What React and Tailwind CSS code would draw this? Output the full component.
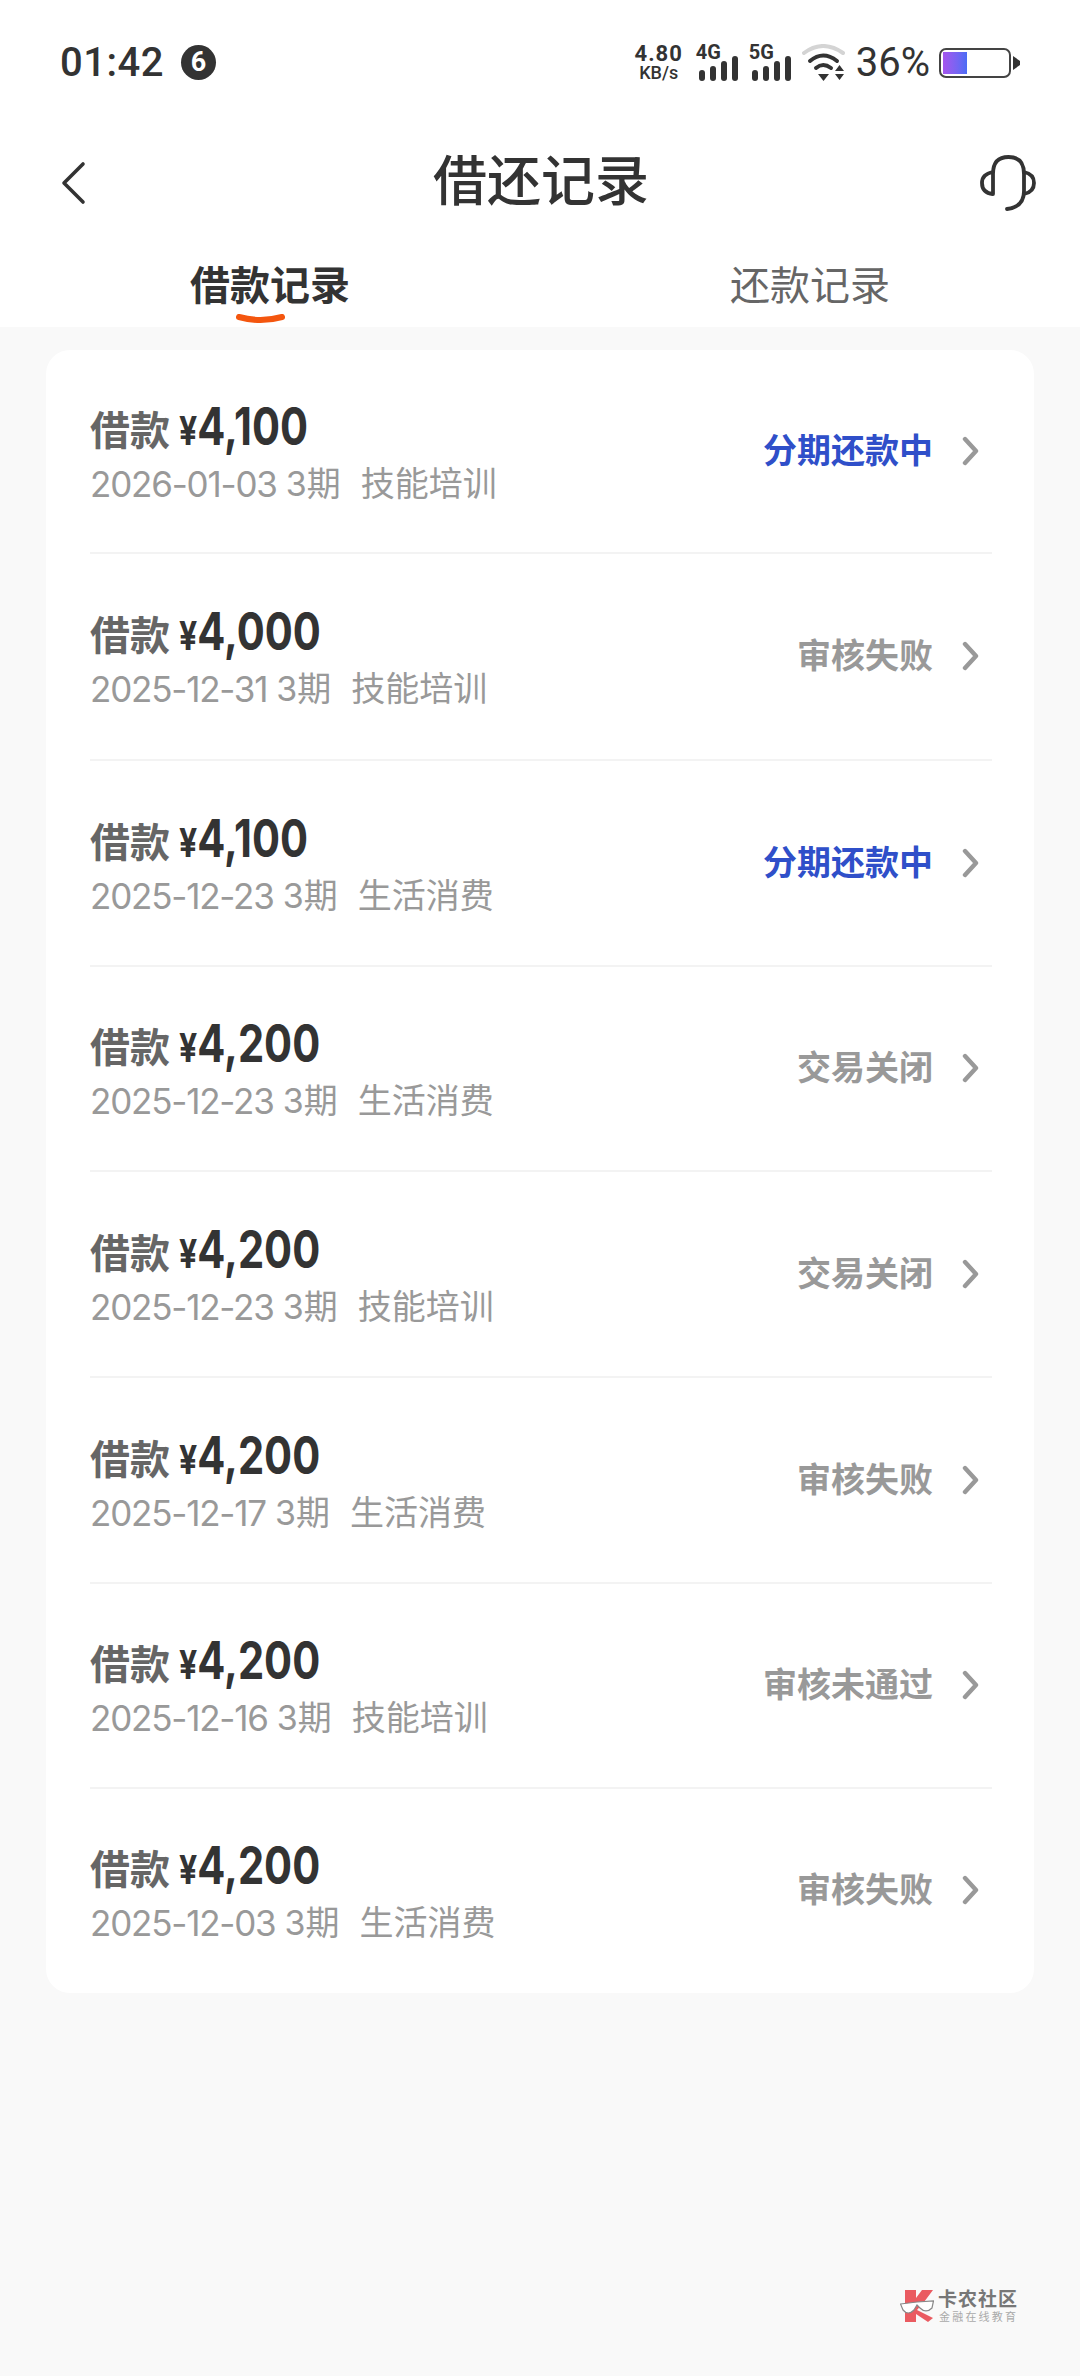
const CJK = "font-['Roboto','Noto_Sans_CJK_SC',sans-serif]";

const rows = [
  { date: "2026-01-03", tag: "技能培训", amount: "4,100", status: "分期还款中", blue: true, h: "h-[204px]" },
  { date: "2025-12-31", tag: "技能培训", amount: "4,000", status: "审核失败", h: "h-[207px]" },
  { date: "2025-12-23", tag: "生活消费", amount: "4,100", status: "分期还款中", blue: true, h: "h-[206px]" },
  { date: "2025-12-23", tag: "生活消费", amount: "4,200", status: "交易关闭", h: "h-[205px]" },
  { date: "2025-12-23", tag: "技能培训", amount: "4,200", status: "交易关闭", h: "h-[206px]" },
  { date: "2025-12-17", tag: "生活消费", amount: "4,200", status: "审核失败", h: "h-[206px]" },
  { date: "2025-12-16", tag: "技能培训", amount: "4,200", status: "审核未通过", h: "h-[205px]" },
  { date: "2025-12-03", tag: "生活消费", amount: "4,200", status: "审核失败", h: "h-[204px]", last: true },
];

function Signal() {
  return (
    <svg width="42" height="25" viewBox="0 0 42 25" className="block">
      <rect x="2" y="14" width="6" height="11" rx="3" fill="#333" />
      <rect x="13" y="10" width="6" height="15" rx="3" fill="#333" />
      <rect x="24" y="5" width="6" height="20" rx="3" fill="#333" />
      <rect x="35" y="0" width="6" height="25" rx="3" fill="#333" />
    </svg>
  );
}

function SignalGroup({ label }) {
  return (
    <div className="relative w-[42px] h-[36px]">
      <span className="absolute left-[-1px] top-[-2px] text-[20px] leading-[18px] font-bold text-[#333] font-['Roboto',sans-serif]">{label}</span>
      <div className="absolute left-0 bottom-0"><Signal /></div>
    </div>
  );
}

function Wifi() {
  return (
    <svg width="44" height="38" viewBox="0 0 44 38" className="block">
      <path d="M2 9 Q21 -5 41 9" fill="none" stroke="#d4d4d4" strokeWidth="4" strokeLinecap="round" />
      <path d="M8 17 Q21 6 35 17" fill="none" stroke="#333" strokeWidth="4" strokeLinecap="round" />
      <path d="M14 24 Q21 18 29 24" fill="none" stroke="#333" strokeWidth="4" strokeLinecap="round" />
      <path d="M16 30 H27 L21.5 37 Z" fill="#333" />
      <path d="M33 27 L37.500 21 L42 27 Z M33 30 H42 L37.500 36 Z" fill="#333" />
    </svg>
  );
}

function Battery() {
  return (
    <div className="flex items-center">
      <div className="w-[72px] h-[30px] rounded-[7px] border-2 border-[#444] p-[2px] flex">
        <div className="w-[24px] h-full bg-gradient-to-r from-[#a455ee] to-[#4a6cf5]" />
      </div>
      <svg width="7" height="14" viewBox="0 0 7 14" className="block ml-[2px]"><path d="M0 0 L7 5 V9 L0 14 Z" fill="#333" /></svg>
    </div>
  );
}

function Chevron() {
  return (
    <svg width="18" height="30" viewBox="0 0 18 30" className="block">
      <path d="M3 3 L14 15 L3 27" fill="none" stroke="#999" strokeWidth="4.400" strokeLinecap="round" strokeLinejoin="round" />
    </svg>
  );
}

function Row({ r }) {
  return (
    <div className={`${r.h} relative flex items-center pl-[44px] pr-[54px]`}>
      <div className="flex-1 min-w-0 mt-[3px]">
        <div className="flex items-baseline h-[56px]">
          <span className="text-[40px] leading-[56px] font-bold text-[#666]">借款</span>
          <span className="ml-[9px] inline-block origin-left scale-x-[0.8] text-[52px] leading-[56px] font-bold text-[#333] font-['Inter',sans-serif] whitespace-nowrap">
            <span className="text-[40px]">¥</span>{r.amount}
          </span>
        </div>
        <div className="mt-[4px] h-[50px] flex items-center text-[34px] leading-[50px] text-[#999] whitespace-nowrap font-['Inter','Noto_Sans_CJK_SC',sans-serif]">
          <span className="text-[35px] tracking-[-1.2px]">{r.date}</span>
          <span className="ml-[9px]">3期</span>
          <span className="ml-[20px]">{r.tag}</span>
        </div>
      </div>
      <div className="flex items-center gap-[29px] mb-[3px]">
        <span className={`text-[34px] leading-[48px] font-bold ${r.blue ? "text-[#2f4fc9]" : "text-[#999]"}`}>{r.status}</span>
        <Chevron />
      </div>
      {!r.last && <div className="absolute left-[44px] right-[42px] bottom-0 h-[2px] bg-[#f3f3f3]" />}
    </div>
  );
}

function Watermark() {
  return (
    <div className="absolute left-[900px] top-[2290px] flex items-start gap-[4px]">
      <svg width="34" height="32" viewBox="0 0 34 32" className="block">
        <path d="M5 0 H16 V8 L22 0 H33 L24 12 L17 20 L33 28 L28 32 L16 24 V32 H5 Z" fill="#ea5b61" />
        <path d="M0.500 14 L17 12 L33.500 11 L32 18 Q26 24 20 18 L17 15 L14 20 Q8 26 3 20 Z" fill="#fff" stroke="#888" strokeWidth="1.200" />
      </svg>
      <div className="flex flex-col">
        <span className="text-[19px] leading-[20px] font-bold text-[#777] tracking-[1px]">卡农社区</span>
        <span className="text-[11px] leading-[12px] text-[#aaa] tracking-[2.200px] mt-[2px] ml-[1px]">金融在线教育</span>
      </div>
    </div>
  );
}

export default function App() {
  return (
    <div className={`relative w-[1080px] h-[2376px] bg-[#f9f9f9] overflow-hidden ${CJK}`}>
      <div className="bg-white h-[327px] flex flex-col">
        {/* status bar */}
        <div className="h-[125px] flex items-center pl-[60px] pr-[60px] text-[#333]">
          <span className="text-[40px] leading-[48px] font-medium tracking-[0.5px] font-['Roboto',sans-serif]">01:42</span>
          <span className="ml-[17px] w-[35px] h-[35px] rounded-full bg-[#333] text-white text-[27px] leading-[35px] font-bold text-center font-['Roboto',sans-serif]">6</span>
          <div className="ml-auto flex items-center">
            <div className="flex flex-col items-center w-[48px] text-[#333] font-['Roboto',sans-serif]">
              <span className="text-[22px] leading-[20px] font-bold tracking-[1px]">4.80</span>
              <span className="text-[18px] leading-[17px] font-medium">KB/s</span>
            </div>
            <div className="ml-[14px]"><SignalGroup label="4G" /></div>
            <div className="ml-[11px]"><SignalGroup label="5G" /></div>
            <div className="ml-[10px]"><Wifi /></div>
            <span className="ml-[10px] text-[40px] leading-[48px] font-normal font-['Roboto',sans-serif]">36%</span>
            <div className="ml-[9px]"><Battery /></div>
          </div>
        </div>
        {/* nav */}
        <div className="h-[115px] flex items-center justify-between pl-[60px] pr-[44px]">
          <svg width="28" height="44" viewBox="0 0 28 44" className="block">
            <path d="M23 3 L4 22 L23 41" fill="none" stroke="#333" strokeWidth="3.600" strokeLinecap="round" strokeLinejoin="round" />
          </svg>
          <span className="ml-[14px] text-[54px] leading-[72px] font-medium text-[#333]">借还记录</span>
          <svg width="56" height="56" viewBox="0 0 56 56" className="block">
            <path d="M13 39 V19 Q13 2 28.500 2 Q44 2 44 19 V36 Q44 52 27 54" fill="none" stroke="#333" strokeWidth="3.800" strokeLinecap="round" />
            <path d="M13 17 Q2 19 2 28 Q2 38 13 39" fill="none" stroke="#333" strokeWidth="3.800" />
            <path d="M44 17 Q54 19 54 28 Q54 37 44 39" fill="none" stroke="#333" strokeWidth="3.800" />
          </svg>
        </div>
        {/* tabs */}
        <div className="relative flex-1 grid grid-cols-2 text-[40px] leading-[56px]">
          <div className="relative flex justify-center pt-[19px] font-bold text-[#333]">
            <span>借款记录</span>
            <svg width="49" height="13" viewBox="0 0 49 13" className="block absolute left-[236px] top-[74px]">
              <path d="M3 3 Q24.500 9 46 3" fill="none" stroke="#f4560f" strokeWidth="6" strokeLinecap="round" />
            </svg>
          </div>
          <div className="flex justify-center pt-[19px] text-[#666]"><span>还款记录</span></div>
        </div>
      </div>
      <div className="mx-[46px] mt-[23px] bg-white rounded-[24px]">
        {rows.map((r, i) => <Row key={i} r={r} />)}
      </div>
      <Watermark />
    </div>
  );
}
